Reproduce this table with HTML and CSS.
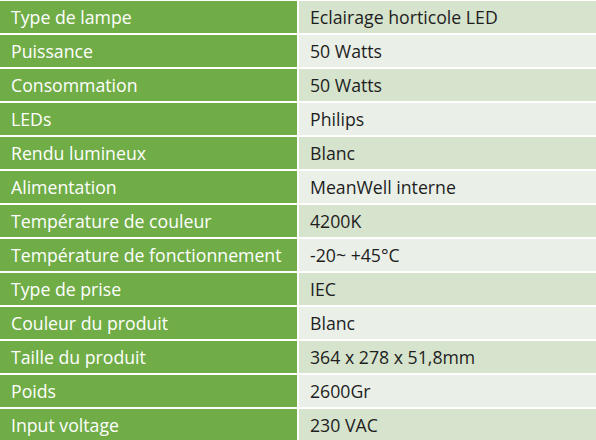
FILE: index.html
```html
<!DOCTYPE html>
<html lang="fr">
<head>
<meta charset="utf-8">
<link rel="stylesheet" href="styles.css">
</head>
<body>
<div class="spec">
  <div class="k">Type de lampe</div><div class="v odd">Eclairage horticole LED</div>
  <div class="k">Puissance</div><div class="v even">50 Watts</div>
  <div class="k">Consommation</div><div class="v odd">50 Watts</div>
  <div class="k">LEDs</div><div class="v even">Philips</div>
  <div class="k">Rendu lumineux</div><div class="v odd">Blanc</div>
  <div class="k">Alimentation</div><div class="v even">MeanWell interne</div>
  <div class="k">Température de couleur</div><div class="v odd">4200K</div>
  <div class="k">Température de fonctionnement</div><div class="v even">-20~ +45°C</div>
  <div class="k">Type de prise</div><div class="v odd">IEC</div>
  <div class="k">Couleur du produit</div><div class="v even">Blanc</div>
  <div class="k">Taille du produit</div><div class="v odd">364 x 278 x 51,8mm</div>
  <div class="k">Poids</div><div class="v even">2600Gr</div>
  <div class="k">Input voltage</div><div class="v odd">230 VAC</div>
</div>
</body>
</html>
```
FILE: styles.css
```css
html, body {
  margin: 0;
  padding: 0;
  background: #ffffff;
}
body {
  font-family: "Open Sans", "Liberation Sans", sans-serif;
  font-size: 17.7px;
}
.spec {
  display: grid;
  grid-template-columns: 297px 297px;
  grid-auto-rows: 32px;
  column-gap: 2px;
  row-gap: 2px;
  padding-top: 1px;
}
.k, .v {
  display: flex;
  align-items: center;
  white-space: nowrap;
  padding-left: 11px;
}
.k {
  background: #70ad47;
  color: #ffffff;
}
.v {
  color: #1e1e1e;
}
.v.odd { background: #d6e3cd; }
.v.even { background: #eaf0e8; }
```
